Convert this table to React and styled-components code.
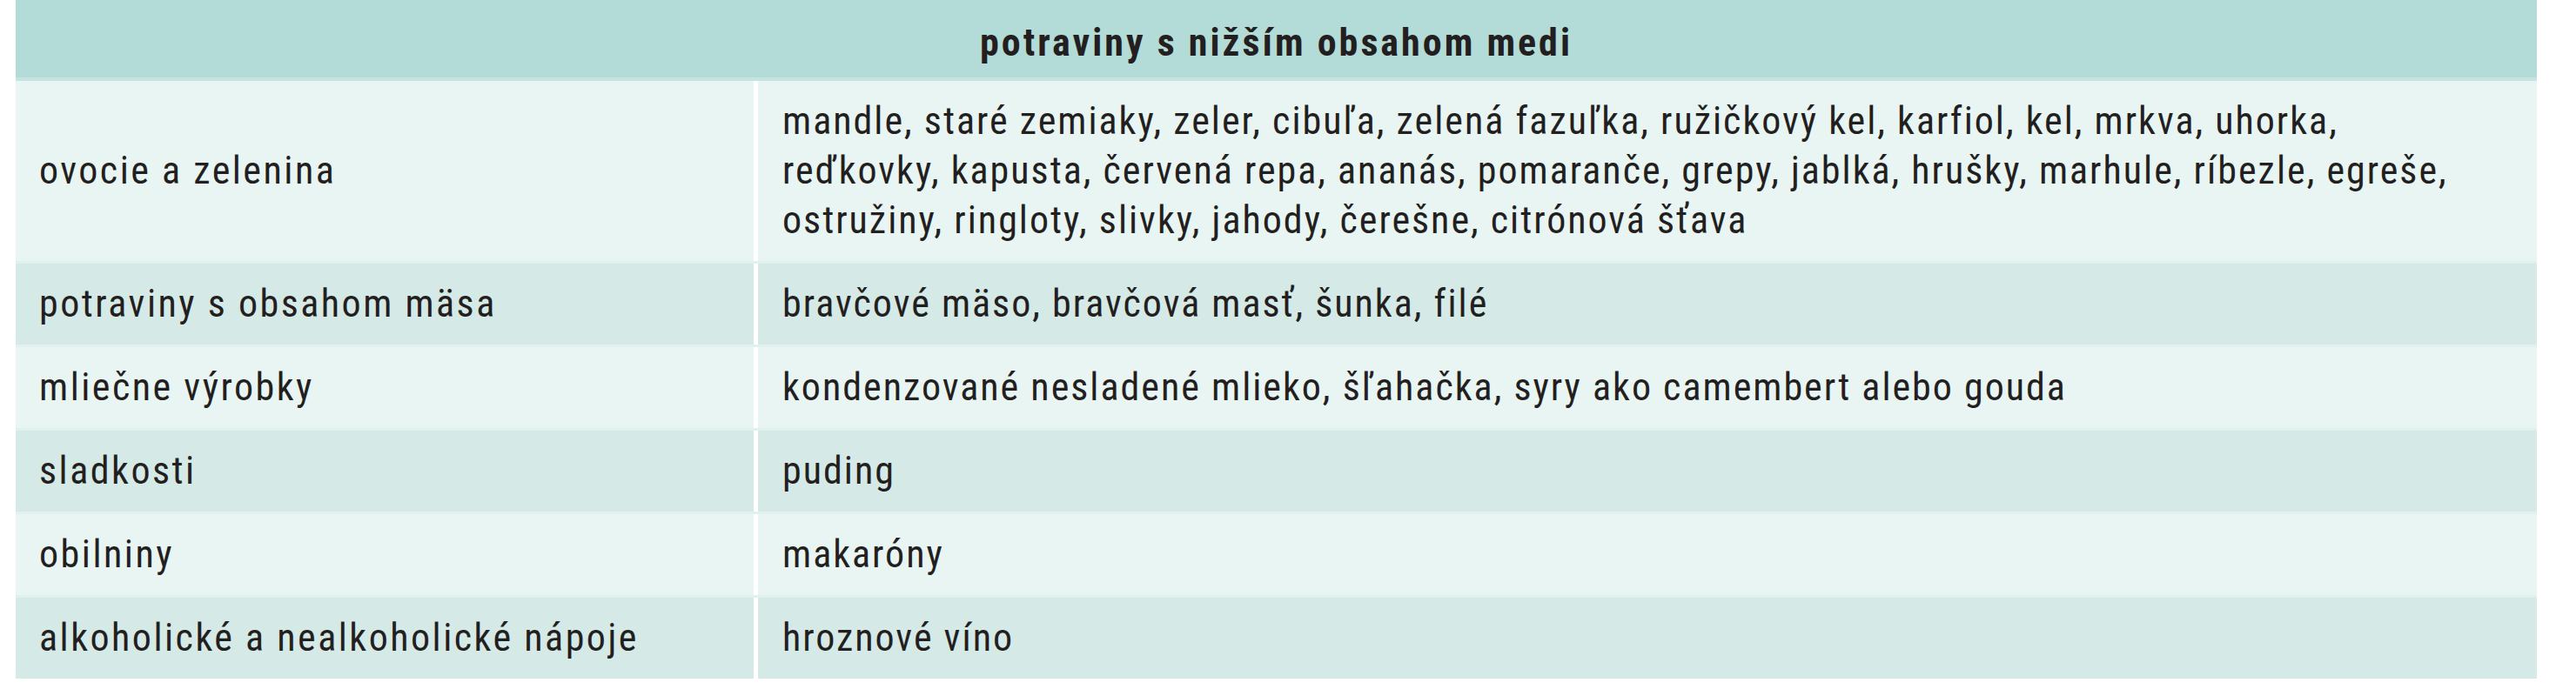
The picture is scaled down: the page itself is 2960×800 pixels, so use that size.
import React from 'react';
import styled, { createGlobalStyle } from 'styled-components';

const GlobalStyle = createGlobalStyle`
  body {
    margin: 0;
    background: #ffffff;
  }
`;

const rows = [
  {
    group: 'ovocie a zelenina',
    foods: [
      'mandle, staré zemiaky, zeler, cibuľa, zelená fazuľka, ružičkový kel, karfiol, kel, mrkva, uhorka,',
      'reďkovky, kapusta, červená repa, ananás, pomaranče, grepy, jablká, hrušky, marhule, ríbezle, egreše,',
      'ostružiny, ringloty, slivky, jahody, čerešne, citrónová šťava',
    ],
  },
  { group: 'potraviny s obsahom mäsa', foods: ['bravčové mäso, bravčová masť, šunka, filé'] },
  { group: 'mliečne výrobky', foods: ['kondenzované nesladené mlieko, šľahačka, syry ako camembert alebo gouda'] },
  { group: 'sladkosti', foods: ['puding'] },
  { group: 'obilniny', foods: ['makaróny'] },
  { group: 'alkoholické a nealkoholické nápoje', foods: ['hroznové víno'] },
];

function App() {
  return (
    <>
      <GlobalStyle />
      <StyledTable>
        <StyledHead>potraviny s nižším obsahom medi</StyledHead>
        {rows.map((row, i) => (
          <StyledRow key={row.group} $dark={i % 2 === 1} $first={i === 0}>
            <StyledGroup>{row.group}</StyledGroup>
            <StyledFoods>
              {row.foods.map((line) => (
                <StyledLine key={line}>{line}</StyledLine>
              ))}
            </StyledFoods>
          </StyledRow>
        ))}
      </StyledTable>
    </>
  );
}

const StyledTable = styled.div`
  width: 2897px;
  margin-left: 18px;
  display: flex;
  flex-direction: column;
  font-family: 'Roboto Condensed', 'Liberation Sans Narrow', 'Liberation Sans', sans-serif;
  font-size: 44px;
  line-height: 57px;
  letter-spacing: 2px;
  color: #231f20;
`;

const StyledHead = styled.div`
  height: 89px;
  box-sizing: border-box;
  padding-top: 21px;
  text-align: center;
  font-weight: 700;
  letter-spacing: 3px;
  background: #b3dbd7;
`;

const StyledRow = styled.div`
  display: grid;
  grid-template-columns: 848px 1fr;
  border-top: ${(p) => (p.$first ? '4px solid #c5e3e0' : '3px solid #e1f1ef')};
  background: ${(p) => (p.$dark ? '#d5eae7' : '#e8f5f3')};
`;

const StyledGroup = styled.div`
  display: flex;
  align-items: center;
  padding: 18px 27px;
  letter-spacing: 2.5px;
`;

const StyledFoods = styled.div`
  display: flex;
  flex-direction: column;
  justify-content: center;
  padding: 18px 28px;
  border-left: 5px solid #ffffff;
`;

const StyledLine = styled.span`
  white-space: nowrap;
`;

export default App;
